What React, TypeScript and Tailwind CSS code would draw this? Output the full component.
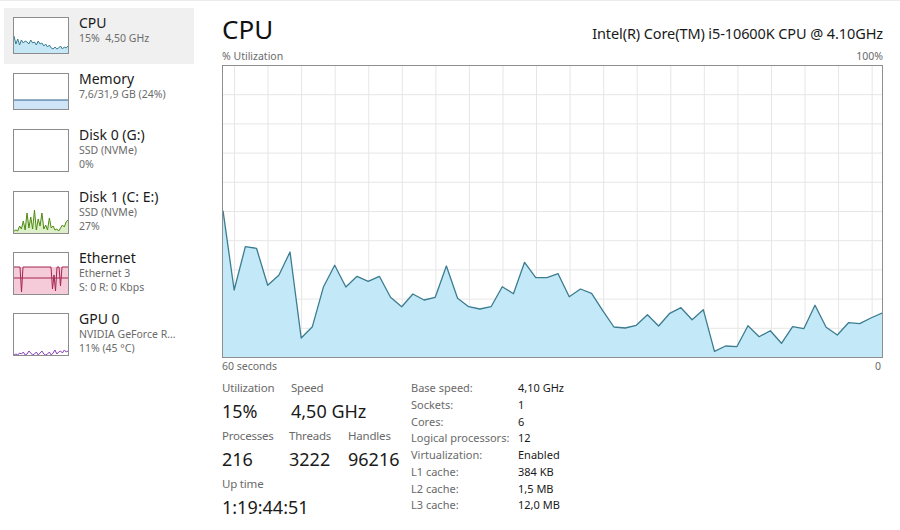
import React from "react";

const font = { fontFamily: '"Noto Sans", "Open Sans", sans-serif' };

// CPU history, 60 samples (y in px from the chart's inner top)
const cpuData = [
  210.7, 290, 246.7, 248.3, 285.3, 275.3, 252, 338, 326.7, 286.7, 265.3, 287,
  276.3, 281.3, 276.3, 297.3, 306.7, 294, 300, 297.3, 266, 298.3, 306.7, 309,
  306.7, 286.7, 293.7, 262.3, 277.7, 277.7, 273.7, 296.7, 289, 293.3, 310.7,
  327, 328, 325.3, 314.7, 326, 313.3, 307.7, 319.7, 309.7, 351.3, 346, 346.7,
  325.7, 336.7, 330.7, 343.3, 326.7, 328.7, 305.3, 327.3, 335, 322.7, 323.7,
  318, 313,
].map((y) => y - 66);

const toPoints = (data: number[], w: number) =>
  data.map((y, i) => `${((i * w) / (data.length - 1)).toFixed(2)},${y}`).join(" ");

const areaPath = (data: number[], w: number, h: number) =>
  `M0,${h} L${toPoints(data, w).split(" ").join(" L")} L${w},${h} Z`;

const Thumb: React.FC<{ kind: string; h: number }> = ({ kind, h }) => {
  const w = 54;
  let content: React.ReactNode = null;

  if (kind === "cpu") {
    const d = [18, 26, 21, 27, 22, 25, 23, 24, 26, 22, 25, 24, 27, 23, 26, 25, 28, 26, 29, 27, 30, 31, 29, 31, 30, 28, 31, 29, 30, 28];
    content = (
      <>
        <path d={areaPath(d, w, h)} fill="#c6e8f6" />
        <polyline points={toPoints(d, w)} fill="none" stroke="#3b7d91" strokeWidth="1" />
      </>
    );
  } else if (kind === "mem") {
    content = (
      <>
        <rect x="0" y={h - 9} width={w} height="9" fill="#cfe5f7" />
        <line x1="0" x2={w} y1={h - 9} y2={h - 9} stroke="#2c5f86" strokeWidth="1" />
      </>
    );
  } else if (kind === "disk1") {
    const d = [39, 38, 39, 34, 37, 29, 38, 21, 36, 25, 37, 18, 38, 27, 34, 21, 37, 33, 38, 26, 36, 34, 38, 37, 39, 36, 33, 35, 30, 28];
    content = (
      <>
        <path d={areaPath(d, w, h)} fill="#dcefc9" />
        <polyline points={toPoints(d, w)} fill="none" stroke="#4e8a12" strokeWidth="1" />
      </>
    );
  } else if (kind === "eth") {
    const pts = "0,14 6,14 7.5,39 9,14 37,14 38.5,36 40,22 41.5,38 43,14 45,14 46.5,33 48,14 54,14";
    content = (
      <>
        <rect x="0" y="14" width={w} height={h - 14} fill="#f5cad9" />
        <line x1="0" x2={w} y1="25" y2="25" stroke="#a3264f" strokeWidth="1" />
        <polyline points={pts} fill="none" stroke="#a3264f" strokeWidth="1" />
      </>
    );
  } else if (kind === "gpu") {
    const d = [41, 40, 41, 39, 40, 38, 41, 40, 37, 39, 41, 40, 38, 41, 39, 37, 40, 41, 40, 38, 41, 39, 36, 40, 38, 37, 39, 36, 38, 37];
    content = <polyline points={toPoints(d, w)} fill="none" stroke="#8a3fc0" strokeWidth="1" />;
  }

  return (
    <div className="w-[56px] shrink-0 border border-[#8c8c8c] bg-white" style={{ height: h + 2 }}>
      <svg width={w} height={h} viewBox={`0 0 ${w} ${h}`} className="block">
        {content}
      </svg>
    </div>
  );
};

const items = [
  { kind: "cpu", title: "CPU", lines: ["15%  4,50 GHz"], h: 35, height: "h-[56px]", active: true },
  { kind: "mem", title: "Memory", lines: ["7,6/31,9 GB (24%)"], h: 35, height: "h-[56px]" },
  { kind: "disk0", title: "Disk 0 (G:)", lines: ["SSD (NVMe)", "0%"], h: 41, height: "h-[62px]" },
  { kind: "disk1", title: "Disk 1 (C: E:)", lines: ["SSD (NVMe)", "27%"], h: 41, height: "h-[61px]" },
  { kind: "eth", title: "Ethernet", lines: ["Ethernet 3", "S: 0 R: 0 Kbps"], h: 41, height: "h-[61px]" },
  { kind: "gpu", title: "GPU 0", lines: ["NVIDIA GeForce R...", "11% (45 °C)"], h: 41, height: "h-[61px]" },
];

const specs = [
  ["Base speed:", "4,10 GHz"],
  ["Sockets:", "1"],
  ["Cores:", "6"],
  ["Logical processors:", "12"],
  ["Virtualization:", "Enabled"],
  ["L1 cache:", "384 KB"],
  ["L2 cache:", "1,5 MB"],
  ["L3 cache:", "12,0 MB"],
];

const Stat: React.FC<{ label: string; value: string; w?: string }> = ({ label, value, w }) => (
  <div className={w}>
    <div className="text-[11.5px] leading-[16px] text-[#6a6a6a] tracking-[-0.2px]">{label}</div>
    <div className="mt-[3px] text-[18px] leading-[24px] text-[#1a1a1a]">{value}</div>
  </div>
);

export default function App() {
  const W = 659;
  const H = 291;

  return (
    <div className="flex h-[530px] w-[900px] bg-white border-t border-[#ececec]" style={font}>
      {/* Sidebar */}
      <div className="w-[198px] shrink-0 px-[4px] pt-[7px]">
        {items.map((it) => (
          <div
            key={it.title}
            className={`flex pl-[9px] pt-[9px] ${it.height} ${it.active ? "bg-[#f0f0f0]" : ""}`}
          >
            <Thumb kind={it.kind} h={it.h} />
            <div className="ml-[10px] -mt-[2px]">
              <div className="text-[14px] leading-[16px] text-[#1a1a1a]">{it.title}</div>
              <div className="mt-[1px]">
                {it.lines.map((l) => (
                  <div key={l} className="text-[10.5px] leading-[13.5px] text-[#6b6b6b] whitespace-pre">
                    {l}
                  </div>
                ))}
              </div>
            </div>
          </div>
        ))}
      </div>

      {/* Main panel */}
      <div className="flex-1 pl-[24px] pr-[17px] pt-[12px]">
        <div className="flex items-baseline justify-between">
          <div className="text-[26px] leading-[32px] text-[#111]">CPU</div>
          <div className="text-[14.5px] text-[#1a1a1a] tracking-[-0.1px]">
            Intel(R) Core(TM) i5-10600K CPU @ 4.10GHz
          </div>
        </div>

        <div className="mt-[4px] flex justify-between text-[10.5px] leading-[14px] text-[#6a6a6a]">
          <span>% Utilization</span>
          <span>100%</span>
        </div>

        <div className="mt-[2px] h-[293px] border border-[#8e8e8e]">
          <svg width={W} height={H} viewBox={`0 0 ${W} ${H}`} className="block">
            {Array.from({ length: 20 }).map((_, k) => (
              <line key={`v${k}`} x1={11.5 + 33.56 * k} x2={11.5 + 33.56 * k} y1="0" y2={H} stroke="#e6e6e6" strokeWidth="1" />
            ))}
            {Array.from({ length: 9 }).map((_, k) => (
              <line key={`h${k}`} x1="0" x2={W} y1={29.2 * (k + 1) - 0.5} y2={29.2 * (k + 1) - 0.5} stroke="#e6e6e6" strokeWidth="1" />
            ))}
            <path d={areaPath(cpuData, W, H)} fill="#c3e8f7" />
            <polyline points={toPoints(cpuData, W)} fill="none" stroke="#3c7c90" strokeWidth="1.3" strokeLinejoin="round" />
          </svg>
        </div>

        <div className="mt-[1px] flex justify-between text-[10.5px] leading-[14px] text-[#6a6a6a]">
          <span>60 seconds</span>
          <span className="pr-[2px]">0</span>
        </div>

        <div className="mt-[7px] flex">
          <div className="w-[189px] shrink-0">
            <div className="flex">
              <Stat label="Utilization" value="15%" w="w-[69px]" />
              <Stat label="Speed" value="4,50 GHz" />
            </div>
            <div className="mt-[5px] flex">
              <Stat label="Processes" value="216" w="w-[67px]" />
              <Stat label="Threads" value="3222" w="w-[59px]" />
              <Stat label="Handles" value="96216" />
            </div>
            <div className="mt-[5px]">
              <Stat label="Up time" value="1:19:44:51" />
            </div>
          </div>

          <div className="text-[11px] leading-[16.75px]">
            {specs.map(([k, v]) => (
              <div key={k} className="flex">
                <span className="w-[107px] text-[#6a6a6a]">{k}</span>
                <span className="text-[#1a1a1a]">{v}</span>
              </div>
            ))}
          </div>
        </div>
      </div>
    </div>
  );
}
